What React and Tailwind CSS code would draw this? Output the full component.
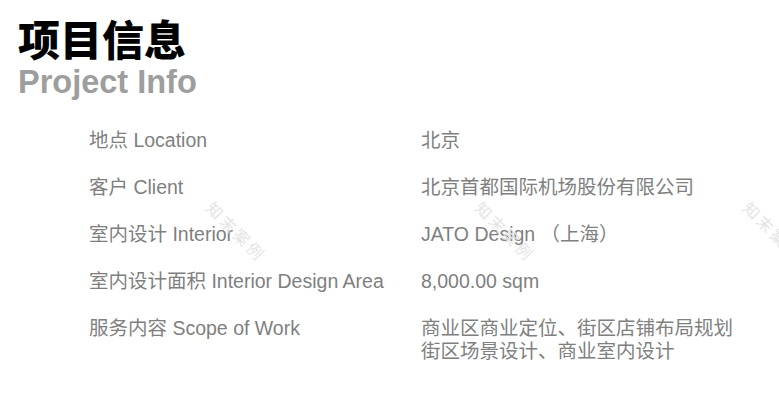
const rows = [
  { label: "地点 Location", value: ["北京"] },
  { label: "客户 Client", value: ["北京首都国际机场股份有限公司"] },
  { label: "室内设计 Interior", value: ["JATO Design （上海）"] },
  { label: "室内设计面积 Interior Design Area", value: ["8,000.00 sqm"] },
  { label: "服务内容 Scope of Work", value: ["商业区商业定位、街区店铺布局规划", "街区场景设计、商业室内设计"] },
];

const font = { fontFamily: '"Liberation Sans", "Noto Sans CJK SC", sans-serif' };

// faint diagonal watermark laid over the content
function Watermark({ className }) {
  return (
    <div className={`pointer-events-none absolute rotate-45 origin-top-left whitespace-nowrap text-[16px] leading-[16px] tracking-[3px] text-[#e4e4e4] ${className}`}>
      知末案例
    </div>
  );
}

export default function App() {
  return (
    <div className="relative w-[779px] h-[407px] overflow-hidden bg-white" style={font}>
      <div className="pl-[18px] pt-[18px]">
        <h1 className="text-[42px] leading-[48px] font-black text-black">项目信息</h1>
        <h2 className="text-[32.5px] leading-[33px] font-bold text-[#9e9e9e]">Project Info</h2>
      </div>

      <div className="mt-[30px] flex flex-col gap-[24px] pl-[89px]">
        {rows.map((r) => (
          <div key={r.label} className="flex text-[19.5px] leading-[23px] text-[#7f7f7f]">
            <div className="w-[332px] shrink-0">{r.label}</div>
            <div>
              {r.value.map((v) => (
                <div key={v}>{v}</div>
              ))}
            </div>
          </div>
        ))}
      </div>

      <Watermark className="left-[214px] top-[200px]" />
      <Watermark className="left-[483px] top-[200px]" />
      <Watermark className="left-[751px] top-[200px]" />
    </div>
  );
}
